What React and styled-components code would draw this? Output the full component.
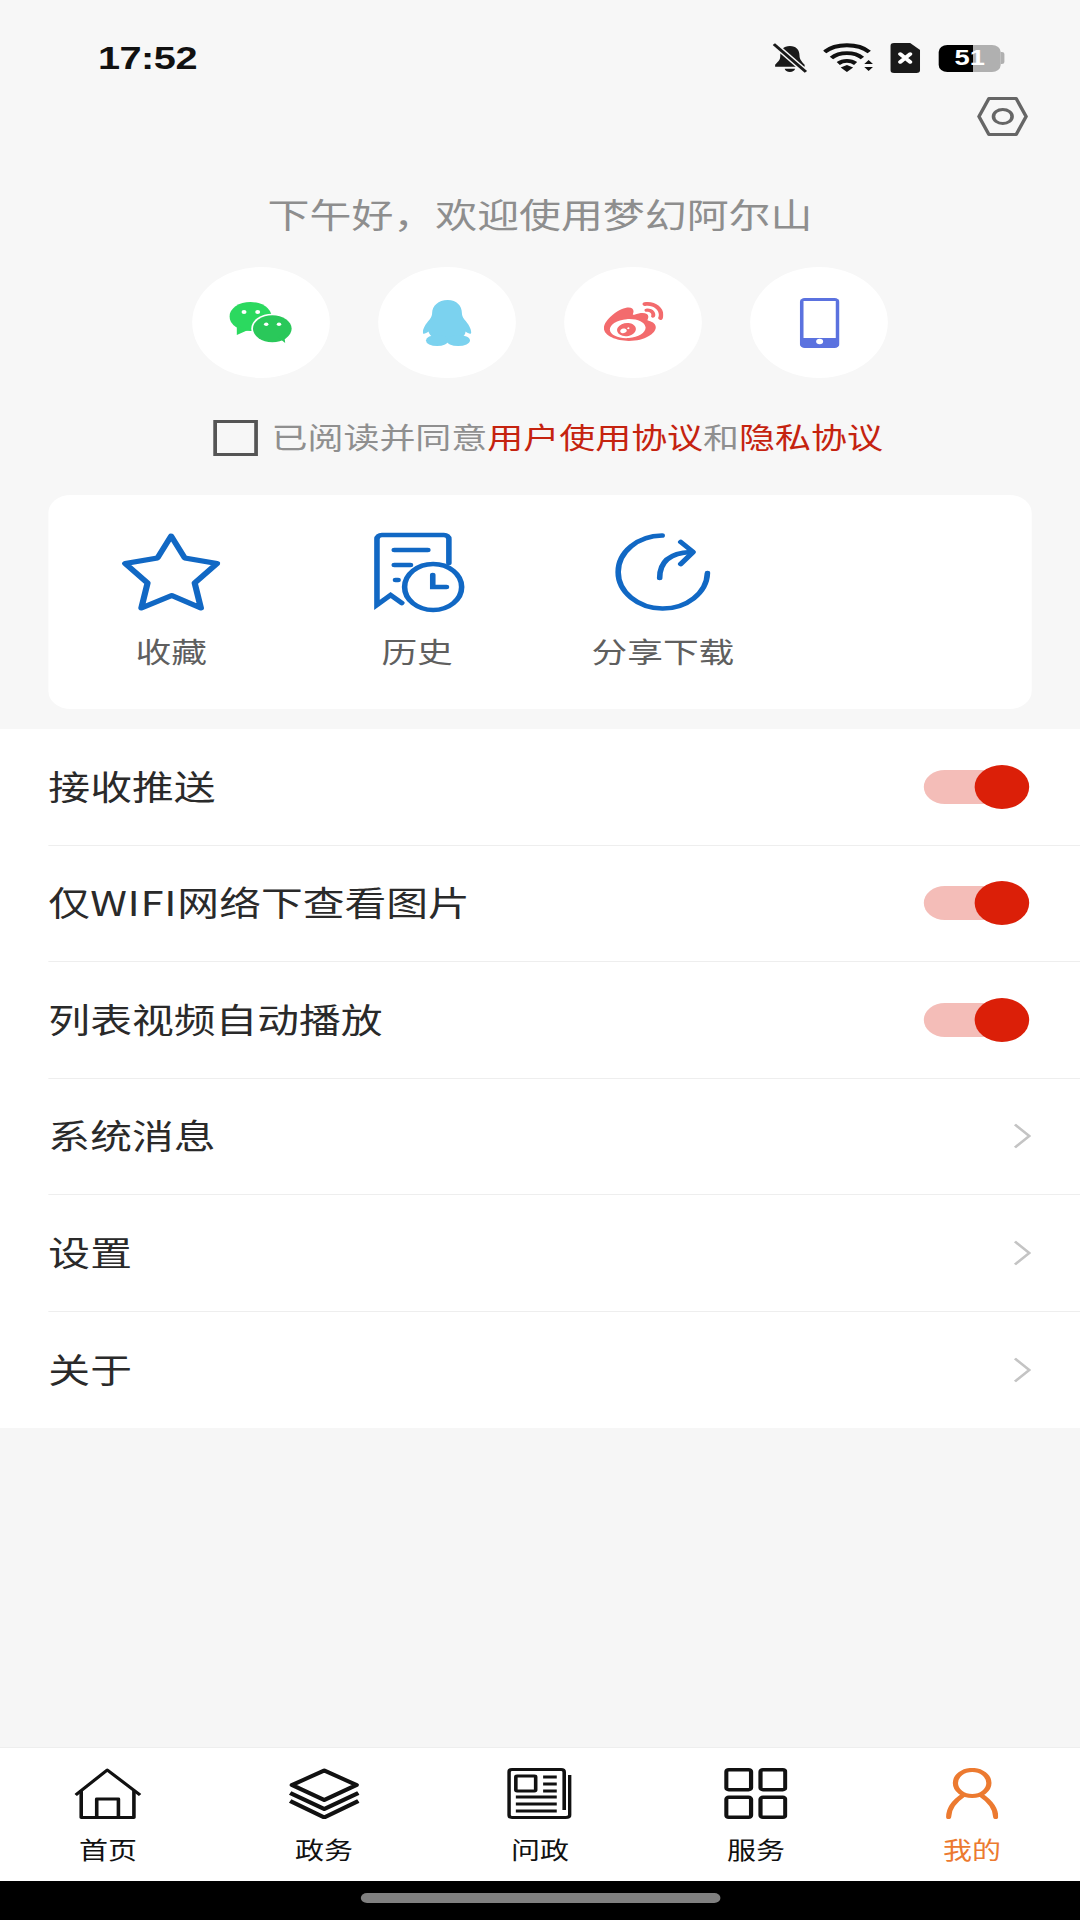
import styled, { createGlobalStyle } from "styled-components";
import { FaWeibo } from "react-icons/fa";

const GlobalStyle = createGlobalStyle`
  html, body {
    margin: 0;
    padding: 0;
    background: #f7f7f7;
    overflow: hidden;
  }
  * { box-sizing: border-box; }
`;

// the whole screen is stretched sideways in the reference (circles are ovals),
// so the page is laid out at 871px and scaled up to 1080
const Page = styled.div`
  width: 871px;
  height: 1920px;
  display: flex;
  flex-direction: column;
  background: #f7f7f7;
  font-family: "Noto Sans CJK SC", "Liberation Sans", sans-serif;
  transform: scaleX(1.24);
  transform-origin: 0 0;
`;

const StatusBar = styled.div`
  height: 97px;
  padding: 43px 61px 0 79px;
  display: flex;
  justify-content: space-between;
  align-items: flex-start;
`;

const Time = styled.span`
  font-family: "Liberation Sans", sans-serif;
  font-weight: 700;
  font-size: 32px;
  line-height: 30px;
  letter-spacing: -0.4px;
  color: #111;
`;

const StatusIcons = styled.div`
  display: flex;
  align-items: center;
  gap: 13px;
  height: 30px;
`;

const Battery = styled.div`
  display: flex;
  align-items: center;
  margin-left: 2px;
`;

const BatteryBody = styled.div`
  width: 50px;
  height: 27px;
  border-radius: 7px;
  background: linear-gradient(to right, #000 55%, #b0b0b0 55%);
  display: flex;
  align-items: center;
  justify-content: center;
  color: #fff;
  font-family: "Liberation Sans", sans-serif;
  font-weight: 700;
  font-size: 22px;
`;

const BatteryNub = styled.div`
  width: 3px;
  height: 12px;
  background: #b0b0b0;
  border-radius: 0 2px 2px 0;
`;

const SettingsRow = styled.div`
  height: 39px;
  padding-right: 42px;
  display: flex;
  justify-content: flex-end;
`;

const Greeting = styled.div`
  margin-top: 58px;
  height: 40px;
  line-height: 40px;
  text-align: center;
  font-size: 33.8px;
  color: #8e8e8e;
`;

const Logins = styled.div`
  margin-top: 33px;
  display: flex;
  justify-content: center;
  gap: 39px;
`;

const LoginCircle = styled.div`
  width: 111px;
  height: 111px;
  border-radius: 50%;
  background: #fff;
  display: flex;
  align-items: center;
  justify-content: center;
`;

const Agreement = styled.div`
  margin-top: 42px;
  height: 36px;
  padding-left: 13px;
  display: flex;
  align-items: center;
  justify-content: center;
  gap: 11px;
  font-size: 29px;
  color: #8f8f8f;
`;

const AgreementText = styled.span`
  margin-top: -5px;
`;

const CheckBox = styled.div`
  width: 36px;
  height: 36px;
  border: 3px solid #555;
`;

const Red = styled.span`
  color: #c5230f;
`;

const Card = styled.div`
  margin: 39px 39px 0;
  height: 214px;
  padding-top: 38px;
  border-radius: 18px;
  background: #fff;
  display: grid;
  grid-template-columns: repeat(4, 1fr);
`;

const CardItem = styled.div`
  display: flex;
  flex-direction: column;
  align-items: center;
`;

const CardIcon = styled.div`
  height: 79px;
  display: flex;
  align-items: flex-start;
  justify-content: center;

  svg {
    overflow: visible;
  }
`;

const CardLabel = styled.div`
  margin-top: 22px;
  line-height: 34px;
  font-size: 28.8px;
  color: #5f5f5f;
`;

const List = styled.div`
  margin-top: 20px;
  background: #fff;
`;

const Row = styled.div`
  height: 116.5px;
  margin-left: 39px;
  padding-right: 39px;
  display: flex;
  align-items: center;
  justify-content: space-between;
  border-bottom: ${(p) => (p.$last ? "none" : "1.5px solid #eeeeee")};
  font-size: 33.7px;
  color: #2a2a2a;
`;

const RowLabel = styled.span`
  margin-top: -3px;
`;

const Wide = styled.span`
  letter-spacing: 0.6px;
`;

const ToggleTrack = styled.div`
  width: 80px;
  height: 34px;
  margin-right: 7px;
  border-radius: 17px;
  background: #f4bdb8;
  display: flex;
  align-items: center;
  justify-content: flex-end;
`;

const ToggleThumb = styled.div`
  width: 44px;
  height: 44px;
  flex-shrink: 0;
  margin-right: -5px;
  border-radius: 50%;
  background: #db1f08;
`;

const Spacer = styled.div`
  flex: 1;
  background: #f6f6f6;
`;

const Nav = styled.div`
  height: 134px;
  padding-top: 20px;
  background: #fff;
  border-top: 1px solid #eeeeee;
  display: grid;
  grid-template-columns: repeat(5, 1fr);
`;

const NavItem = styled.div`
  display: flex;
  flex-direction: column;
  align-items: center;
  color: ${(p) => (p.$active ? "#ec7a30" : "#111")};
`;

const NavIcon = styled.div`
  height: 51px;
  display: flex;
  align-items: center;
`;

const NavLabel = styled.div`
  margin-top: 16px;
  line-height: 28px;
  font-size: 23.4px;
`;

const HomeBar = styled.div`
  height: 39px;
  padding-top: 12px;
  background: #000;
  display: flex;
  justify-content: center;
`;

const HomePill = styled.div`
  width: 290px;
  height: 10px;
  border-radius: 5px;
  background: #808080;
`;

const BellOff = () => (
  <svg width="28" height="30" viewBox="0 0 27 29">
    <path d="M13.5 3c5 0 7.5 4 7.5 9 0 4 2 6 4 9v2H2v-2c2-3 4-4 4-8.500C6 7 8.500 3 13.500 3z" fill="#1a1a1a" />
    <path d="M9.500 25h8c0 2-2 3-4 3s-4-1-4-3z" fill="#1a1a1a" />
    <path d="M1 1l25 27" stroke="#f7f7f7" strokeWidth="5" />
    <path d="M1 1l25 27" stroke="#1a1a1a" strokeWidth="2.500" />
  </svg>
);

const Wifi = () => (
  <svg width="41" height="30" viewBox="0 0 41 30" fill="none">
    <path d="M1 9C10 0 28 0 37 9" stroke="#111" strokeWidth="3.800" />
    <path d="M6.500 15C13 8.500 25 8.500 31.500 15" stroke="#111" strokeWidth="3.800" />
    <path d="M12 20.500C16 17 22 17 26 20.500" stroke="#111" strokeWidth="3.800" />
    <path d="M19 29l-5-4.500 5-2.500 5 2.500z" fill="#111" />
    <path d="M33 21l3.500-4 3.500 4zM33 24l3.500 4 3.500-4z" fill="#111" />
  </svg>
);

const Sim = () => (
  <svg width="24" height="30" viewBox="0 0 24 30">
    <path d="M3 0h13l8 7v20a3 3 0 0 1-3 3H3a3 3 0 0 1-3-3V3a3 3 0 0 1 3-3z" fill="#1a1a1a" />
    <path d="M8 11l8 8M16 11l-8 8" stroke="#fff" strokeWidth="3.500" strokeLinecap="round" />
  </svg>
);

const Hexagon = () => (
  <svg width="41" height="39" viewBox="0 0 41 39" fill="none" stroke="#666" strokeWidth="2.900">
    <path d="M9.500 1.500h22L39.500 19.500l-8 18h-22l-8-18z" strokeLinejoin="round" />
    <ellipse cx="20.700" cy="19.500" rx="7.500" ry="7" />
  </svg>
);

const WeChat = () => (
  <svg width="51" height="41" viewBox="0 0 51 41">
    <ellipse cx="17" cy="14.500" rx="17" ry="14.500" fill="#2bd95f" />
    <path d="M6 23l0 10 9-5z" fill="#2bd95f" />
    <ellipse cx="34.600" cy="26.700" rx="17" ry="15" fill="#fff" />
    <ellipse cx="34.600" cy="26.700" rx="15.600" ry="13.500" fill="#2ac85a" />
    <path d="M39 35l6 6-1-10z" fill="#2ac85a" />
    <circle cx="11.800" cy="10" r="2" fill="#fff" />
    <circle cx="22.800" cy="10" r="2" fill="#fff" />
    <circle cx="29.700" cy="22.300" r="1.800" fill="#fff" />
    <circle cx="40" cy="22.300" r="1.800" fill="#fff" />
  </svg>
);

const QQ = () => (
  <svg width="40" height="46" viewBox="0 0 40 46" fill="#7bd2ef">
    <path d="M20 0c7.500 0 11.500 6 11.500 13 0 2 .5 4 2 6.500 3 4 5.500 9 5.500 13 0 2.500-2.500 1-4.500-1C34 37 30 40 20 40S6 37 4.500 31.500C2.500 33.500 0 35 0 32.500c0-4 2.500-9 5.500-13 1.500-2.500 2-4.500 2-6.500C7.500 6 12.500 0 20 0z" />
    <ellipse cx="11.500" cy="40.500" rx="9" ry="5.500" />
    <ellipse cx="28.500" cy="40.500" rx="9.500" ry="5.500" />
  </svg>
);

const Phone = () => (
  <svg width="32" height="50" viewBox="0 0 32 50">
    <rect width="32" height="50" rx="4" fill="#5b72df" />
    <rect x="3" y="3" width="26" height="37" fill="#fff" />
    <ellipse cx="16" cy="43.500" rx="2.800" ry="2.800" fill="#fff" />
  </svg>
);

const Star = () => (
  <svg width="78" height="77" viewBox="0 0 78 77">
    <path
      d="M39 3L50 25 76 30.500 58 50 63 75 39.500 62.500 15 75 20 50 2 30.500 28 25z"
      fill="none"
      stroke="#1168c4"
      strokeWidth="5"
      strokeLinejoin="round"
    />
  </svg>
);

const History = () => (
  <svg width="72" height="79" viewBox="-2 0 72 79" fill="none" stroke="#1168c4" strokeWidth="4.500" strokeLinecap="round">
    <path d="M60 30V6a4 4 0 0 0-4-4H6A4 4 0 0 0 2 6V72L13 62 22 70" />
    <path d="M16 17H43M16 32H29M17 47H19" />
    <circle cx="47.300" cy="54" r="23" />
    <path d="M47 42V54H58" />
  </svg>
);

const Share = () => (
  <svg width="76" height="77" viewBox="0 0 76 77" fill="none" stroke="#1168c4" strokeWidth="4.500" strokeLinecap="round" strokeLinejoin="round">
    <path d="M37 2.500A36 36.500 0 1 0 73.500 40" />
    <path d="M35 45C35 30 42 20 60 19" />
    <path d="M52 9L62 19 52 31" />
  </svg>
);

const HomeIcon = () => (
  <svg width="54" height="51" viewBox="0 0 54 51" fill="none" stroke="currentColor" strokeWidth="2.900" strokeLinejoin="round">
    <path d="M1 27L26.500 2 53 27" />
    <path d="M5.500 22V49.500H48V22" />
    <path d="M18 49.500V31H35.500V49.500" />
  </svg>
);

const LayersIcon = () => (
  <svg width="57" height="51" viewBox="0 0 57 51" fill="none" stroke="currentColor" strokeWidth="3.800" strokeLinejoin="round">
    <path d="M28.500 2.500L54.500 17 28.500 32 2.500 17z" />
    <path d="M1 25L28.500 41 56 25" />
    <path d="M1 33L28.500 49.500 56 33" />
  </svg>
);

const NewsIcon = () => (
  <svg width="52" height="51" viewBox="0 0 52 51" fill="none" stroke="currentColor" strokeWidth="2.900">
    <path d="M46 42V4Q46 1.500 43.500 1.500H4Q1.500 1.500 1.500 4V47Q1.500 49.500 4 49.500H47Q50.500 49.500 50.500 47V7" />
    <rect x="7" y="8" width="16" height="15" rx="1" />
    <path d="M29 9H40M29 16H40M29 23H40M7 29H40M7 36H40M7 43H40" />
  </svg>
);

const GridIcon = () => (
  <svg width="51" height="51" viewBox="0 0 51 51" fill="none" stroke="currentColor" strokeWidth="3.400">
    <rect x="1.700" y="1.700" width="20" height="20" rx="2" />
    <rect x="29.300" y="1.700" width="20" height="20" rx="2" />
    <rect x="1.700" y="29.300" width="20" height="20" rx="2" />
    <rect x="29.300" y="29.300" width="20" height="20" rx="2" />
  </svg>
);

const PersonIcon = () => (
  <svg width="42" height="51" viewBox="0 0 42 51" fill="none" stroke="currentColor" strokeWidth="4.200" strokeLinecap="round">
    <ellipse cx="21" cy="15" rx="13.500" ry="13" />
    <path d="M2 49C2 39 8 32 14 27M40 49C40 39 34 32 28 27" />
  </svg>
);

const Chevron = () => (
  <svg width="15" height="26" viewBox="0 0 15 26" fill="none" stroke="#c4c4c4" strokeWidth="2.400">
    <path d="M1.500 1.500L13 13 1.500 24.500" />
  </svg>
);

const rows = [
  { label: "接收推送", toggle: true },
  {
    label: (
      <>
        仅<Wide>WIFI</Wide>网络下查看图片
      </>
    ),
    toggle: true,
  },
  { label: "列表视频自动播放", toggle: true },
  { label: "系统消息" },
  { label: "设置" },
  { label: "关于" },
];

const navItems = [
  { label: "首页", Icon: HomeIcon },
  { label: "政务", Icon: LayersIcon },
  { label: "问政", Icon: NewsIcon },
  { label: "服务", Icon: GridIcon },
  { label: "我的", Icon: PersonIcon, active: true },
];

export default function App() {
  return (
    <Page>
      <GlobalStyle />
      <StatusBar>
        <Time>17:52</Time>
        <StatusIcons>
          <BellOff />
          <Wifi />
          <Sim />
          <Battery>
            <BatteryBody>51</BatteryBody>
            <BatteryNub />
          </Battery>
        </StatusIcons>
      </StatusBar>
      <SettingsRow>
        <Hexagon />
      </SettingsRow>
      <Greeting>下午好，欢迎使用梦幻阿尔山</Greeting>
      <Logins>
        <LoginCircle>
          <WeChat />
        </LoginCircle>
        <LoginCircle>
          <QQ />
        </LoginCircle>
        <LoginCircle>
          <FaWeibo size={48} color="#f36b6d" />
        </LoginCircle>
        <LoginCircle>
          <Phone />
        </LoginCircle>
      </Logins>
      <Agreement>
        <CheckBox />
        <AgreementText>
          已阅读并同意<Red>用户使用协议</Red>和<Red>隐私协议</Red>
        </AgreementText>
      </Agreement>
      <Card>
        <CardItem>
          <CardIcon>
            <Star />
          </CardIcon>
          <CardLabel>收藏</CardLabel>
        </CardItem>
        <CardItem>
          <CardIcon>
            <History />
          </CardIcon>
          <CardLabel>历史</CardLabel>
        </CardItem>
        <CardItem>
          <CardIcon>
            <Share />
          </CardIcon>
          <CardLabel>分享下载</CardLabel>
        </CardItem>
      </Card>
      <List>
        {rows.map((row, i) => (
          <Row key={i} $last={i === rows.length - 1}>
            <RowLabel>{row.label}</RowLabel>
            {row.toggle ? (
              <ToggleTrack>
                <ToggleThumb />
              </ToggleTrack>
            ) : (
              <Chevron />
            )}
          </Row>
        ))}
      </List>
      <Spacer />
      <Nav>
        {navItems.map(({ label, Icon, active }) => (
          <NavItem key={label} $active={active}>
            <NavIcon>
              <Icon />
            </NavIcon>
            <NavLabel>{label}</NavLabel>
          </NavItem>
        ))}
      </Nav>
      <HomeBar>
        <HomePill />
      </HomeBar>
    </Page>
  );
}
